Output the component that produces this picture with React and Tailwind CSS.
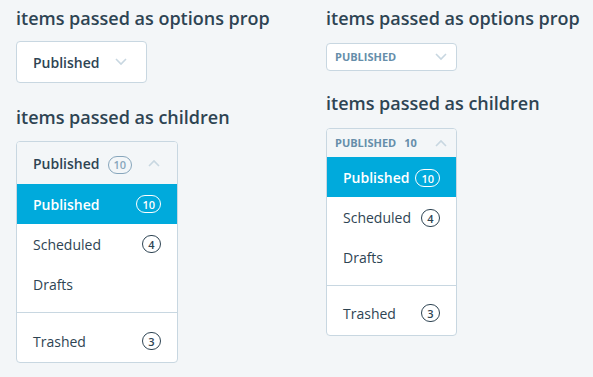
import React from 'react';

const Chevron = ({ up = false, className = '' }) => (
    <svg width="12" height="8" viewBox="0 0 12 8" className={className}>
        <polyline
            points={up ? '1,7 6,2 11,7' : '1,1 6,6 11,1'}
            fill="none"
            stroke="#c8d7e1"
            strokeWidth="1.6"
        />
    </svg>
);

const Count = ({ value, variant = 'dark' }) => {
    const styles = {
        dark: 'border-[#2e4453] text-[#2e4453]',
        light: 'border-white text-white font-bold',
        muted: 'border-[#87a6bc] text-[#87a6bc]',
    };
    return (
        <span
            className={`inline-flex h-[18px] min-w-[19px] items-center justify-center rounded-full border px-[5px] text-[11px] font-semibold leading-none ${styles[variant]}`}
        >
            {value}
        </span>
    );
};

const items = [
    { label: 'Published', count: 10, selected: true },
    { label: 'Scheduled', count: 4 },
    { label: 'Drafts' },
];

const Heading = ({ children, className = '' }) => (
    <h3 className={`whitespace-nowrap text-[18px] font-semibold leading-[27px] text-[#2e4453] ${className}`}>
        {children}
    </h3>
);

// full-size dropdown
const ClosedSelect = () => (
    <div className="flex h-[42px] w-[131px] items-center justify-between rounded border border-[#c8d7e1] bg-white pl-4 pr-[19px]">
        <span className="text-[14px] font-semibold text-[#2e4453]">Published</span>
        <Chevron />
    </div>
);

const OpenSelect = () => (
    <div className="w-[162px] overflow-hidden rounded border border-[#c8d7e1] bg-white">
        <div className="flex h-[42px] items-center bg-[#f3f6f8] pl-4 pr-[17px]">
            <span className="text-[14px] font-semibold text-[#2e4453]">Published</span>
            <span className="ml-[8px]">
                <Count value={10} variant="muted" />
            </span>
            <Chevron up className="ml-auto" />
        </div>
        {items.map((item) => (
            <div
                key={item.label}
                className={`flex h-10 items-center justify-between pl-4 pr-4 text-[14px] ${
                    item.selected ? 'bg-[#00aadc] font-semibold text-white' : 'text-[#2e4453]'
                }`}
            >
                <span>{item.label}</span>
                {item.count && <Count value={item.count} variant={item.selected ? 'light' : 'dark'} />}
            </div>
        ))}
        <div className="mt-2 border-t border-[#c8d7e1] pb-px pt-2">
            <div className="flex h-10 items-center justify-between px-4 text-[14px] text-[#2e4453]">
                <span>Trashed</span>
                <Count value={3} />
            </div>
        </div>
    </div>
);

// compact dropdown
const CompactClosed = () => (
    <div className="flex h-[28px] w-[131px] items-center justify-between rounded border border-[#c8d7e1] bg-white pl-2 pr-[9px]">
        <span className="text-[11px] font-bold uppercase text-[#668eaa]">Published</span>
        <Chevron />
    </div>
);

const CompactOpen = () => (
    <div className="w-[131px] overflow-hidden rounded border border-[#c8d7e1] bg-white">
        <div className="flex h-[28px] items-center bg-[#f3f6f8] pl-2 pr-[9px] text-[11px] font-bold uppercase text-[#668eaa]">
            <span>Published</span>
            <span className="ml-2">10</span>
            <Chevron up className="ml-auto" />
        </div>
        {items.map((item) => (
            <div
                key={item.label}
                className={`flex h-10 items-center pl-4 pr-4 text-[14px] ${
                    item.selected ? 'bg-[#00aadc] font-semibold text-white' : 'text-[#2e4453]'
                }`}
            >
                <span>{item.label}</span>
                {item.count && (
                    <span className="ml-auto">
                        <Count value={item.count} variant={item.selected ? 'light' : 'dark'} />
                    </span>
                )}
            </div>
        ))}
        <div className="mt-2 border-t border-[#c8d7e1] pb-[3px] pt-2">
            <div className="flex h-[38px] items-center justify-between px-4 text-[14px] text-[#2e4453]">
                <span>Trashed</span>
                <Count value={3} />
            </div>
        </div>
    </div>
);

export default function App() {
    return (
        <div
            className="grid h-[377px] w-[593px] grid-cols-[310px_1fr] overflow-hidden bg-[#f3f6f8] px-4 pt-[5px]"
            style={{ fontFamily: '"Open Sans", "Noto Sans", sans-serif' }}
        >
            <div className="flex flex-col items-start">
                <Heading className="mb-[9px]">items passed as options prop</Heading>
                <ClosedSelect />
                <Heading className="mb-[10px] mt-[21px]">items passed as children</Heading>
                <OpenSelect />
            </div>
            <div className="flex flex-col items-start">
                <Heading className="mb-[11px]">items passed as options prop</Heading>
                <CompactClosed />
                <Heading className="mb-[11px] mt-[19px]">items passed as children</Heading>
                <CompactOpen />
            </div>
        </div>
    );
}
